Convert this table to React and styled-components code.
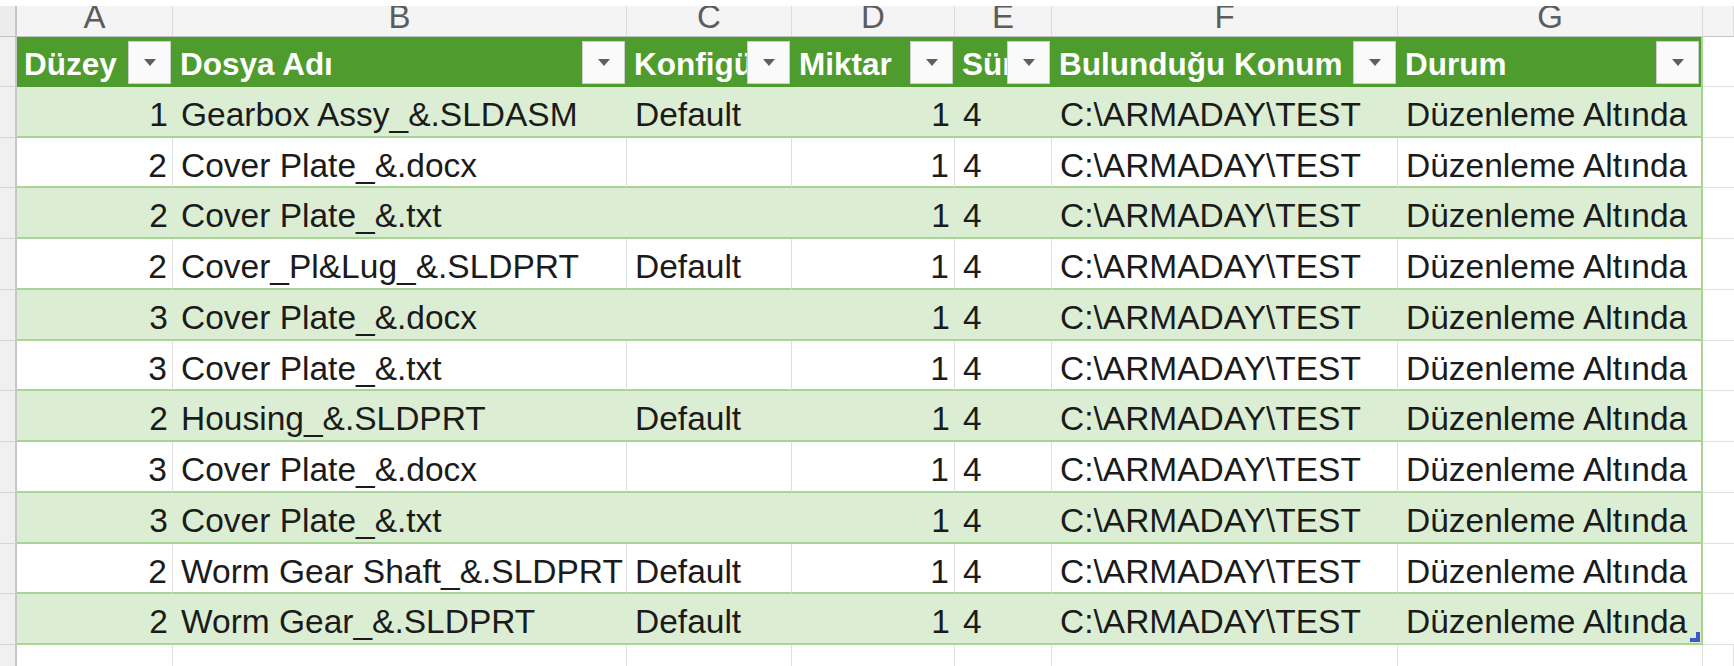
import React from 'react';
import styled, { createGlobalStyle } from 'styled-components';

const COLS = '17px 156px 454px 165px 163px 97px 346px 305px 1fr';
const ROW_H = 50.73;

const GlobalStyle = createGlobalStyle`
  html, body {
    margin: 0;
    padding: 0;
    background: #fff;
  }
  body {
    font-family: "Liberation Sans", Arial, sans-serif;
    overflow: hidden;
  }
`;

const Sheet = styled.div`
  display: flex;
  flex-direction: column;
  width: 1734px;
  height: 666px;
  overflow: hidden;
  background: #fff;
`;

const TopStrip = styled.div`
  height: 6px;
  flex-shrink: 0;
  background: #fff;
`;

const LetterRow = styled.div`
  display: grid;
  grid-template-columns: ${COLS};
  height: 31px;
  flex-shrink: 0;
  box-sizing: border-box;
  background: #f4f4f4;
  border-bottom: 1px solid #c2c2c2;
`;

const Corner = styled.div`
  background: #ececec;
  border-right: 2px solid #c6c6c6;
`;

const Letter = styled.div`
  display: flex;
  justify-content: center;
  align-items: flex-start;
  overflow: hidden;
  border-right: 1px solid #dcdcdc;
  color: #5c5c5c;
  font-size: 33px;
  line-height: 1.15;

  span {
    margin-top: -8px;
  }
`;

const GridRow = styled.div`
  display: grid;
  grid-template-columns: ${COLS};
  height: ${p => p.$h}px;
  flex-shrink: 0;
`;

const RowNum = styled.div`
  box-sizing: border-box;
  background: #f0f0f0;
  border-right: 2px solid #c6c6c6;
  border-bottom: 1px solid #d6d6d6;
`;

const HeadCell = styled.div`
  display: flex;
  align-items: center;
  box-sizing: border-box;
  overflow: hidden;
  padding: 0 2px 0 7px;
  background: #4e9c2e;
  ${p => p.$last && 'border-right: 2px solid #a7d595;'}
`;

const HeadLabel = styled.span`
  flex: 1;
  min-width: 0;
  overflow: hidden;
  white-space: nowrap;
  padding-top: 5px;
  color: #fff;
  font-weight: 700;
  font-size: 31.5px;
`;

const FilterButton = styled.span`
  flex: 0 0 43px;
  height: 43px;
  box-sizing: border-box;
  display: flex;
  align-items: center;
  justify-content: center;
  background: #fafafa;
  border: 1px solid #cdcdcd;
  margin-top: 1px;
`;

const Cell = styled.div`
  position: relative;
  display: flex;
  align-items: center;
  justify-content: ${p => (p.$num ? 'flex-end' : 'flex-start')};
  box-sizing: border-box;
  padding: 7px ${p => (p.$num ? '5px' : '4px')} 0 8px;
  overflow: hidden;
  white-space: nowrap;
  background: ${p => (p.$band ? '#dbeed3' : '#fff')};
  border-bottom: 2px solid #a7d595;
  border-right: ${p =>
    p.$last ? '2px solid #a7d595' : p.$band ? 'none' : '1px solid #dedede'};
  color: #1b1b1b;
  font-size: 33.5px;
`;

const OuterCell = styled.div`
  box-sizing: border-box;
  background: #fff;
  border-bottom: 1px solid #e0e0e0;
`;

const BlankCell = styled.div`
  box-sizing: border-box;
  background: #fff;
  border-right: 1px solid #e0e0e0;
`;

const BlankRow = styled.div`
  display: grid;
  grid-template-columns: ${COLS};
  flex: 1;
`;

const BlankNum = styled.div`
  background: #f0f0f0;
  border-right: 2px solid #c6c6c6;
`;

const ResizeHandle = styled.svg`
  position: absolute;
  right: 1px;
  bottom: 1px;
`;

const Caret = () => (
  <svg width="12" height="7" viewBox="0 0 12 7">
    <polygon points="0,0 12,0 6,7" fill="#5f5f5f" />
  </svg>
);

const letters = ['A', 'B', 'C', 'D', 'E', 'F', 'G', ''];
const headers = ['Düzey', 'Dosya Adı', 'Konfigürasyon', 'Miktar', 'Sürüm', 'Bulunduğu Konum', 'Durum'];

const rows = [
  [1, 'Gearbox Assy_&.SLDASM', 'Default'],
  [2, 'Cover Plate_&.docx', ''],
  [2, 'Cover Plate_&.txt', ''],
  [2, 'Cover_Pl&Lug_&.SLDPRT', 'Default'],
  [3, 'Cover Plate_&.docx', ''],
  [3, 'Cover Plate_&.txt', ''],
  [2, 'Housing_&.SLDPRT', 'Default'],
  [3, 'Cover Plate_&.docx', ''],
  [3, 'Cover Plate_&.txt', ''],
  [2, 'Worm Gear Shaft_&.SLDPRT', 'Default'],
  [2, 'Worm Gear_&.SLDPRT', 'Default'],
];

const rowHeight = i => Math.round((i + 1) * ROW_H) - Math.round(i * ROW_H);

const App = () => {
  return (
    <Sheet>
      <GlobalStyle />
      <TopStrip />
      <LetterRow>
        <Corner />
        {letters.map((l, i) => (
          <Letter key={i}>
            <span>{l}</span>
          </Letter>
        ))}
      </LetterRow>

      <GridRow $h={50}>
        <RowNum />
        {headers.map((h, i) => (
          <HeadCell key={h} $last={i === headers.length - 1}>
            <HeadLabel>{h}</HeadLabel>
            <FilterButton>
              <Caret />
            </FilterButton>
          </HeadCell>
        ))}
        <OuterCell />
      </GridRow>

      {rows.map(([level, name, config], i) => {
        const band = i % 2 === 0;
        const isLast = i === rows.length - 1;
        return (
          <GridRow key={i} $h={rowHeight(i)}>
            <RowNum />
            <Cell $band={band} $num>{level}</Cell>
            <Cell $band={band}>{name}</Cell>
            <Cell $band={band}>{config}</Cell>
            <Cell $band={band} $num>1</Cell>
            <Cell $band={band}>4</Cell>
            <Cell $band={band}>C:\ARMADAY\TEST</Cell>
            <Cell $band={band} $last>
              Düzenleme Altında
              {isLast && (
                <ResizeHandle width="10" height="10" viewBox="0 0 10 10">
                  <polygon points="10,0 10,10 0,10 0,6 6,6 6,0" fill="#3f58c4" />
                </ResizeHandle>
              )}
            </Cell>
            <OuterCell />
          </GridRow>
        );
      })}

      <BlankRow>
        <BlankNum />
        {letters.map((_, i) => (
          <BlankCell key={i} />
        ))}
      </BlankRow>
    </Sheet>
  );
};

export default App;
